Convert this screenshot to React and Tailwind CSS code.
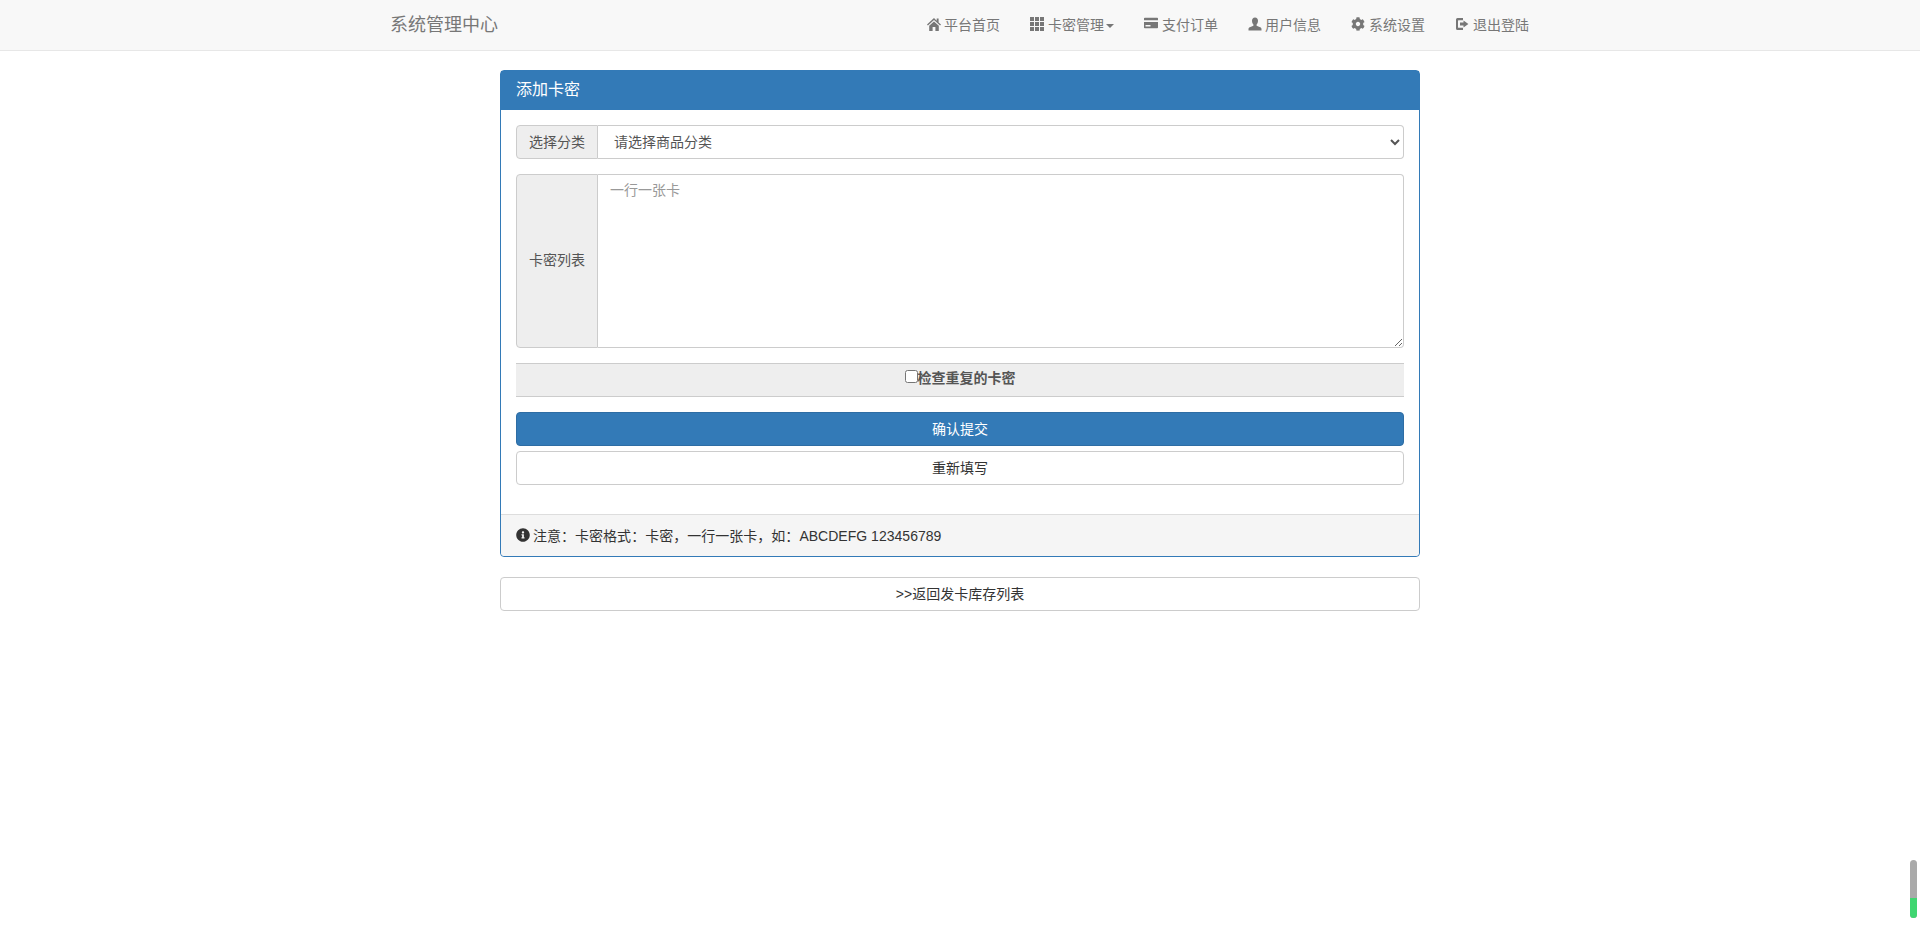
import { FaCog, FaInfoCircle } from "react-icons/fa";

const font = "font-['Liberation_Sans','Noto_Sans_CJK_SC',sans-serif]";

function HomeIcon({ className }) {
  return (
    <svg viewBox="0 0 14 14" className={className} fill="currentColor">
      <path d="M7 1 0 7.600l.9 1L7 3l6.100 5.600.9-1-2.400-2.200V1.600h-1.900v2.100Z" />
      <path d="M2.200 8.800 7 4.400l4.800 4.400V14H8.400v-4H5.600v4H2.200Z" />
    </svg>
  );
}

function GridIcon({ className }) {
  const cells = [0, 5, 10];
  return (
    <svg viewBox="0 0 14 14" className={className} fill="currentColor">
      {cells.map((y) => cells.map((x) => <rect key={`${x}-${y}`} x={x} y={y} width="4" height="4" />))}
    </svg>
  );
}

function CardIcon({ className }) {
  return (
    <svg viewBox="0 0 14 14" className={className} fill="currentColor">
      <path d="M0 2.500a.8.8 0 0 1 .8-.8h12.400a.8.8 0 0 1 .8.8v1.700H0Z" />
      <path d="M0 6h14v5.500a.8.8 0 0 1-.8.8H.8a.8.8 0 0 1-.8-.8Zm1.500 3v1.500h5V9Z" />
    </svg>
  );
}

function UserIcon({ className }) {
  return (
    <svg viewBox="0 0 14 14" className={className} fill="currentColor">
      <path d="M7 .5c1.900 0 3 1.400 3 3.300 0 1.500-.6 3-1.400 3.800v1.200l3.600 1.500c.9.400 1.300 1 1.300 1.900v1.300H.5v-1.300c0-.9.400-1.500 1.300-1.900l3.600-1.500V7.600C4.600 6.800 4 5.300 4 3.800 4 1.900 5.100.5 7 .5Z" />
    </svg>
  );
}

function LogOutIcon({ className }) {
  return (
    <svg viewBox="0 0 14 14" className={className} fill="currentColor">
      <path d="M2.500 1H8v2.200H3.600a.6.6 0 0 0-.6.6v6.400c0 .3.300.6.600.6H8V13H2.500A1.500 1.500 0 0 1 1 11.500v-9A1.500 1.500 0 0 1 2.500 1Z" />
      <path d="M8.500 3.600 13.400 7l-4.900 3.400V8.400H5V5.600h3.500Z" />
    </svg>
  );
}

function NavLink({ icon, children, caret }) {
  return (
    <a className="flex items-center px-[15px] last:pr-[16px] h-[50px] text-sm text-[#777]">
      {icon}
      <span>{children}</span>
      {caret && <span className="ml-[2px] mt-[2px] border-x-[4px] border-t-[4px] border-x-transparent border-t-[#777]" />}
    </a>
  );
}

function Navbar() {
  return (
    <nav className="h-[51px] bg-[#f8f8f8] border-b border-[#e7e7e7]">
      <div className="w-[1170px] mx-auto flex items-center justify-between">
        <a className="px-[15px] text-[18px] text-[#777]">系统管理中心</a>
        <div className="flex">
          <NavLink icon={<HomeIcon className="w-[14px] h-[14px] mr-[3px] mb-[2px]" />}>平台首页</NavLink>
          <NavLink icon={<GridIcon className="w-[14px] h-[14px] mr-[4px] mb-[2px]" />} caret>卡密管理</NavLink>
          <NavLink icon={<CardIcon className="w-[14px] h-[14px] mr-[4px] mb-[4px]" />}>支付订单</NavLink>
          <NavLink icon={<UserIcon className="w-[14px] h-[14px] mr-[3px] mb-[2px]" />}>用户信息</NavLink>
          <NavLink icon={<FaCog className="w-[14px] h-[14px] mr-[4px] mb-[2px]" />}>系统设置</NavLink>
          <NavLink icon={<LogOutIcon className="w-[14px] h-[14px] mr-[4px] mb-[2px]" />}>退出登陆</NavLink>
        </div>
      </div>
    </nav>
  );
}

function Addon({ children }) {
  return (
    <span className="w-[82px] shrink-0 flex items-center justify-center bg-[#eee] border border-[#ccc] rounded-l text-sm text-[#555]">
      {children}
    </span>
  );
}

export default function App() {
  return (
    <div className={`min-h-[936px] bg-white text-[#333] relative ${font}`}>
      <Navbar />
      <div className="w-[920px] ml-[500px] mt-[19px]">
        <div className="border border-[#337ab7] rounded">
          <div className="h-[39px] flex items-center px-[15px] pb-[1px] bg-[#337ab7] text-white text-base">添加卡密</div>
          <div className="p-[15px] pb-[29px]">
            <div className="flex h-[34px]">
              <Addon>选择分类</Addon>
              <select className="flex-1 min-w-0 pl-[12px] pr-1 bg-white border border-l-0 border-[#ccc] rounded-r text-sm text-[#555]">
                <option>请选择商品分类</option>
              </select>
            </div>
            <div className="flex h-[174px] mt-[15px]">
              <Addon><span className="mb-[2px]">卡密列表</span></Addon>
              <textarea
                placeholder="一行一张卡"
                className="flex-1 min-w-0 px-3 py-[5px] border border-l-0 border-[#ccc] rounded-r text-sm text-[#555] leading-[20px] placeholder:text-[#999] outline-none"
              />
            </div>
            <label className="flex items-center justify-center h-[34px] mt-[15px] pb-[4px] bg-[#eee] border-y border-[#ccc] text-sm font-bold text-[#555]">
              <input type="checkbox" className="w-[13px] h-[13px] mb-[3px]" />
              检查重复的卡密
            </label>
            <button className="block w-full h-[34px] mt-[15px] bg-[#337ab7] border border-[#2e6da4] rounded text-sm text-white">确认提交</button>
            <button className="block w-full h-[34px] mt-[5px] pb-[1px] bg-white border border-[#ccc] rounded text-sm text-[#333]">重新填写</button>
          </div>
          <div className="h-[42px] flex items-center px-[15px] bg-[#f5f5f5] border-t border-[#ddd] rounded-b text-sm text-[#333]">
            <FaInfoCircle className="w-[14px] h-[14px] mr-[3px] mb-[2px]" />
            <span className="tracking-[0.02px]">注意：卡密格式：卡密，一行一张卡，如：ABCDEFG 123456789</span>
          </div>
        </div>
        <button className="block w-full h-[34px] mt-[20px] bg-white border border-[#ccc] rounded text-sm text-[#333]">&gt;&gt;返回发卡库存列表</button>
      </div>
      {/* floating scroll widget, bottom right */}
      <div className="absolute left-[1910px] top-[860px] w-[7px] h-[58px] rounded-full overflow-hidden bg-[#aaa] flex flex-col justify-end">
        <div className="h-[20px] bg-[#3fd671]" />
      </div>
    </div>
  );
}
